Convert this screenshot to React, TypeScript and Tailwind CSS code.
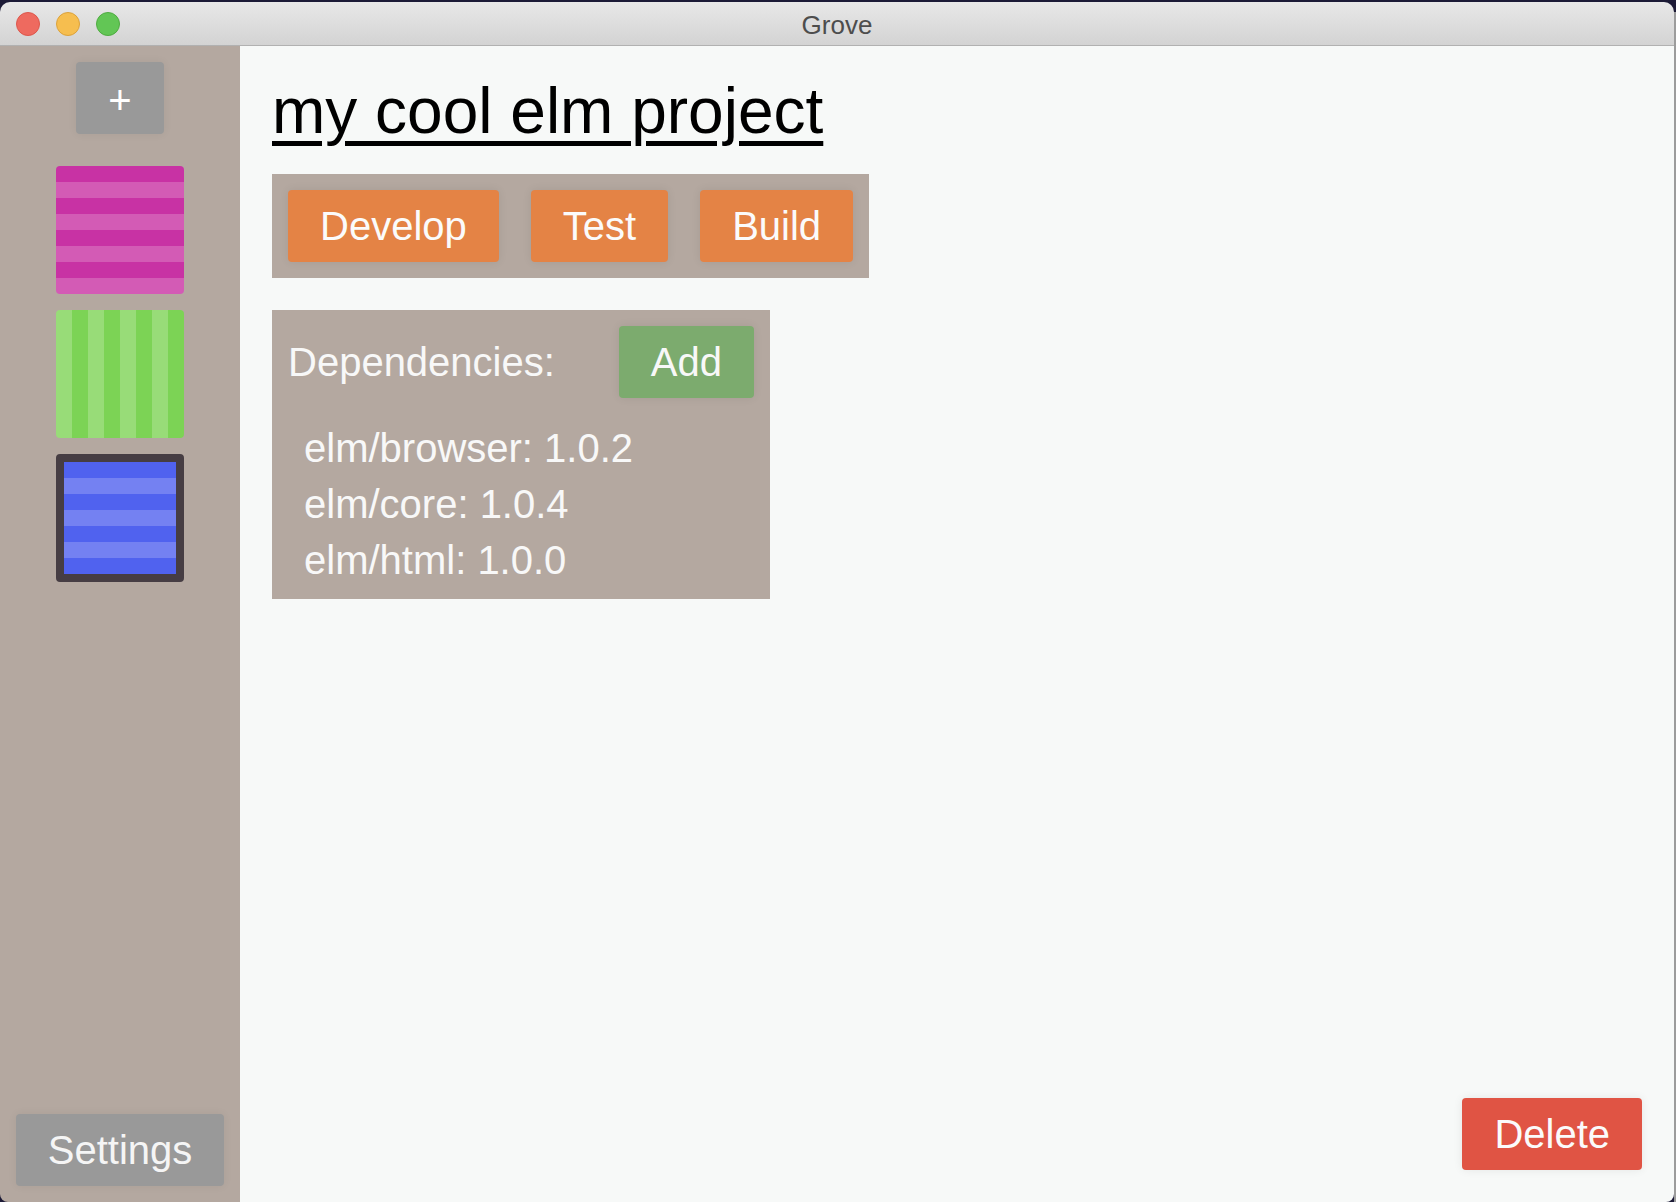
import React from 'react';

// Stripe patterns for the project icons in the sidebar.
const PINK_STRIPES = ['bg-[#c832a4]', 'bg-[#d35bb5]', 'bg-[#c832a4]', 'bg-[#d35bb5]', 'bg-[#c832a4]', 'bg-[#d35bb5]', 'bg-[#c832a4]', 'bg-[#d35bb5]'];
const GREEN_STRIPES = ['bg-[#98dc78]', 'bg-[#7cd355]', 'bg-[#98dc78]', 'bg-[#7cd355]', 'bg-[#98dc78]', 'bg-[#7cd355]', 'bg-[#98dc78]', 'bg-[#7cd355]'];
const BLUE_STRIPES = ['bg-[#5062ef]', 'bg-[#7481f2]', 'bg-[#5062ef]', 'bg-[#7481f2]', 'bg-[#5062ef]', 'bg-[#7481f2]', 'bg-[#5062ef]'];

const DEPENDENCIES = [
  { name: 'elm/browser', version: '1.0.2' },
  { name: 'elm/core', version: '1.0.4' },
  { name: 'elm/html', version: '1.0.0' },
];

const COMMANDS = ['Develop', 'Test', 'Build'];

const TitleBar: React.FC = () => (
  <div className="grid h-[44px] grid-cols-[1fr_auto_1fr] items-center border-b border-[#b1b1b1] bg-gradient-to-b from-[#e8e8e8] to-[#d3d3d3]">
    <div className="flex items-center gap-4 pl-4">
      <span className="h-6 w-6 rounded-full border border-[#dc574c] bg-[#ee6a5f]" />
      <span className="h-6 w-6 rounded-full border border-[#dba23c] bg-[#f6be4f]" />
      <span className="h-6 w-6 rounded-full border border-[#4fab41] bg-[#62c655]" />
    </div>
    <div className="pt-[3px] text-[26px] text-[#4d4d4d]">Grove</div>
    <div />
  </div>
);

const Sidebar: React.FC = () => (
  <div className="flex w-[240px] flex-col items-center bg-[#b4a8a0] p-4">
    <button className="flex h-[72px] w-[88px] items-center justify-center rounded bg-[#999999] pt-[3px] text-[40px] text-white shadow-[0_0_10px_rgba(0,0,0,0.06)]">
      +
    </button>

    <div className="mt-8 flex flex-col gap-4">
      {/* pink, horizontal stripes */}
      <div className="flex h-32 w-32 flex-col overflow-hidden rounded">
        {PINK_STRIPES.map((c, i) => (
          <div key={i} className={`h-4 ${c}`} />
        ))}
      </div>

      {/* green, vertical stripes */}
      <div className="flex h-32 w-32 overflow-hidden rounded">
        {GREEN_STRIPES.map((c, i) => (
          <div key={i} className={`w-4 ${c}`} />
        ))}
      </div>

      {/* blue, selected project */}
      <div className="flex h-32 w-32 flex-col overflow-hidden rounded border-8 border-[#463d43]">
        {BLUE_STRIPES.map((c, i) => (
          <div key={i} className={`h-4 ${c}`} />
        ))}
      </div>
    </div>

    <button className="mt-auto flex h-[72px] items-center rounded bg-[#999999] px-8 text-[40px] text-[#f5f5f5] shadow-[0_0_10px_rgba(0,0,0,0.06)]">
      Settings
    </button>
  </div>
);

const ProjectView: React.FC = () => (
  <div className="flex flex-1 flex-col bg-[#f7f9f8] px-8 pb-8 pt-[28px]">
    <h1 className="text-[64px] leading-[74px] text-black underline decoration-[5px] underline-offset-[8px]">
      my cool elm project
    </h1>

    {/* Commands */}
    <div className="mt-[26px] flex self-start gap-8 bg-[#b4a8a0] p-4">
      {COMMANDS.map((label) => (
        <button
          key={label}
          className="flex h-[72px] items-center rounded bg-[#e48345] px-8 text-[40px] text-[#fbfbfb] shadow-[0_0_10px_rgba(0,0,0,0.08)]"
        >
          {label}
        </button>
      ))}
    </div>

    {/* Dependencies */}
    <div className="mt-8 flex self-start flex-col bg-[#b4a8a0] p-4">
      <div className="flex items-center gap-16">
        <span className="text-[40px] text-[#f8f8f8]">Dependencies:</span>
        <button className="flex h-[72px] items-center rounded bg-[#7cab6e] px-8 text-[40px] text-[#f8f8f8] shadow-[0_0_10px_rgba(0,0,0,0.08)]">
          Add
        </button>
      </div>
      <div className="mt-[27px] flex flex-col gap-[10px] pl-4">
        {DEPENDENCIES.map((dep) => (
          <div key={dep.name} className="text-[40px] leading-[46px] text-[#f8f8f8]">
            {dep.name}: {dep.version}
          </div>
        ))}
      </div>
    </div>

    <button className="mt-auto flex h-[72px] items-center self-end rounded bg-[#e05444] px-8 text-[40px] text-[#fbfbfb] shadow-[0_0_10px_rgba(0,0,0,0.08)]">
      Delete
    </button>
  </div>
);

export default function App() {
  return (
    <div className="flex h-[1202px] w-full flex-col bg-[#1c1a36] font-['Liberation_Sans',Arial,sans-serif]">
      <div className="flex min-h-0 flex-1 pt-[2px]">
        <div className="flex min-h-0 flex-1 flex-col overflow-hidden rounded-t-[10px] rounded-b-[8px]">
          <TitleBar />
          <div className="flex min-h-0 flex-1">
            <Sidebar />
            <ProjectView />
          </div>
        </div>
        <div className="mt-[10px] w-[2px] bg-[#9c9c9c]" />
      </div>
    </div>
  );
}
